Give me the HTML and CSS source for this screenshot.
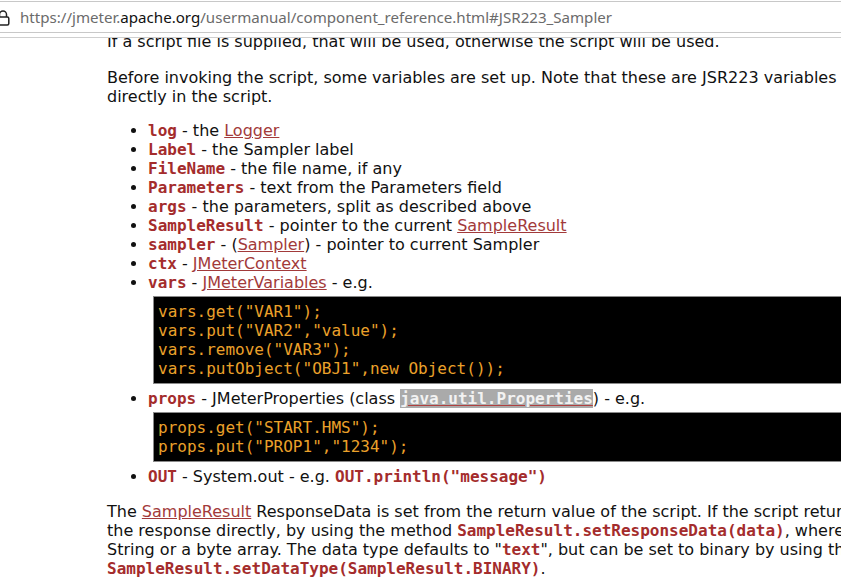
FILE: index.html
```
<!DOCTYPE html>
<html>
<head>
<meta charset="utf-8">
<link rel="stylesheet" href="styles.css">
</head>
<body>
<div class="toolbar">
  <div class="urlbar">
    <svg class="lock" width="14" height="16" viewBox="0 0 14 16"><path d="M3.5 7V4.5a3.5 3.5 0 0 1 7 0V7" fill="none" stroke="#222" stroke-width="1.5"/><rect x="1.2" y="7" width="11.6" height="8" rx="1.5" fill="none" stroke="#222" stroke-width="1.5"/></svg>
    <span class="url">https://jmeter.<span class="host">apache.org</span>/usermanual/component_reference.html#JSR223_Sampler</span>
  </div>
</div>
<div class="viewport">
  <div class="page">
    <p class="first">If a script file is supplied, that will be used, otherwise the script will be used.</p>
    <p>Before invoking the script, some variables are set up. Note that these are JSR223 variables - i.e. they can be used directly in the script.</p>
    <ul class="vars">
      <li><code>log</code> - the <a href="#">Logger</a></li>
      <li><code>Label</code> - the Sampler label</li>
      <li><code>FileName</code> - the file name, if any</li>
      <li><code>Parameters</code> - text from the Parameters field</li>
      <li><code>args</code> - the parameters, split as described above</li>
      <li><code>SampleResult</code> - pointer to the current <a href="#">SampleResult</a></li>
      <li><code>sampler</code> - (<a href="#">Sampler</a>) - pointer to current Sampler</li>
      <li><code>ctx</code> - <a href="#">JMeterContext</a></li>
      <li><code>vars</code> - <a href="#">JMeterVariables</a> - e.g.
<pre class="source">vars.get("VAR1");
vars.put("VAR2","value");
vars.remove("VAR3");
vars.putObject("OBJ1",new Object());</pre>
      </li>
      <li><code>props</code> - JMeterProperties (class <a href="#" class="hl"><code>java.util.Properties</code></a>) - e.g.
<pre class="source">props.get("START.HMS");
props.put("PROP1","1234");</pre>
      </li>
      <li><code>OUT</code> - System.out - e.g. <code>OUT.println("message")</code></li>
    </ul>
    <p class="last">The <a href="#">SampleResult</a> ResponseData is set from the return value of the script. If the script returns null, it can set the response directly, by using the method <code>SampleResult.setResponseData(data)</code>, where data is either a String or a byte array. The data type defaults to "<code>text</code>", but can be set to binary by using the method <code>SampleResult.setDataType(SampleResult.BINARY)</code>.</p>
  </div>
</div>
</body>
</html>
```
FILE: styles.css
```
html, body {
  margin: 0;
  padding: 0;
  background: #fff;
  overflow: hidden;
  width: 841px;
  height: 582px;
}
body {
  font-family: "DejaVu Sans", sans-serif;
  font-size: 16px;
  color: #111;
}
.toolbar {
  height: 36px;
  border-bottom: 1px solid #cfcfcf;
  background: #fff;
  position: relative;
}
.urlbar {
  margin-top: 1px;
  height: 30px;
  border-top: 1px solid #c8c8c8;
  border-bottom: 1px solid #c8c8c8;
  display: flex;
  align-items: center;
  position: relative;
}
.lock {
  position: absolute;
  left: -4px;
  top: 8px;
  z-index: 2;
}
.url {
  margin-left: 20px;
  font-family: "Noto Sans", sans-serif;
  font-size: 15.1px;
  color: #6b6b6b;
  white-space: nowrap;
}
.host {
  color: #111;
}
.viewport {
  height: 545px;
  overflow: hidden;
}
.page {
  width: 1100px;
  margin-top: -6px;
  padding-left: 107px;
  line-height: 19px;
}
p {
  margin: 0 0 15px 0;
  width: 930px;
}
p.first {
  margin-bottom: 17px;
}
p.last {
  width: 888px;
}
ul.vars {
  margin: 0 0 16px 0;
  padding-left: 41px;
}
code {
  font-family: "DejaVu Sans Mono", monospace;
  font-weight: bold;
  color: #a42c2c;
  font-size: 16px;
}
a {
  color: #a23a3a;
  text-decoration: underline;
}
a.hl {
  background: #aaaaaa;
  text-decoration-color: #b04040;
}
a.hl code {
  color: #f2f2f2;
}
pre.source {
  margin: 4px 0 5px 5px;
  padding: 5px 4px;
  background: #000;
  border: 1px solid #8a8a8a;
  color: #eba12a;
  font-family: "DejaVu Sans Mono", monospace;
  font-size: 16px;
  line-height: 19px;
  width: 900px;
}
```
